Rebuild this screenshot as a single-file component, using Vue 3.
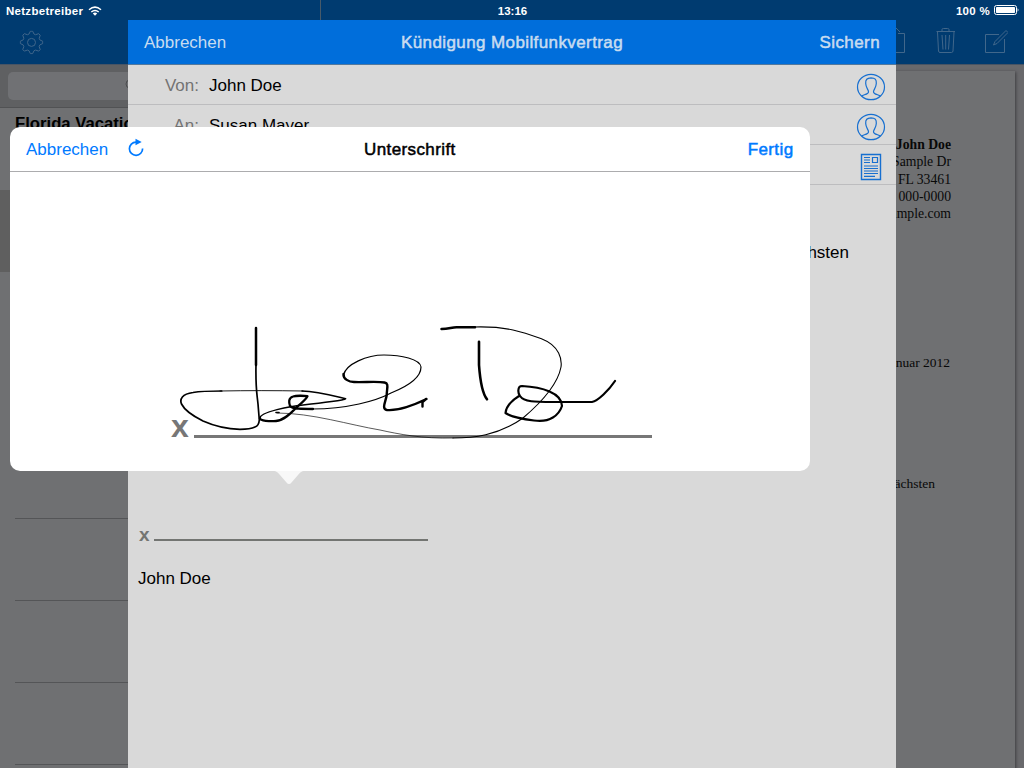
<script setup>
const address = ['John Doe', '123 Sample Dr', 'Lake Worth, FL 33461', '(555) 000-0000', 'john@example.com']
const fields = [
  { label: 'Von:', value: 'John Doe', icon: 'person' },
  { label: 'An:', value: 'Susan Mayer', icon: 'person' },
  { label: '', value: '', icon: 'document' },
]
const notes = [1, 2, 3, 4, 5, 6, 7, 8]
const gearPoints = Array.from({ length: 32 }, (_, i) => {
  const r = i % 4 < 2 ? 11.3 : 8.7
  const a = ((i * 11.25 - 95.6) * Math.PI) / 180
  return `${(12 + r * Math.cos(a)).toFixed(2)},${(12 + r * Math.sin(a)).toFixed(2)}`
}).join(' ')
</script>

<template>
  <div class="screen">
    <header class="nav">
      <div class="nav-left">
        <svg class="gear" width="24" height="24" viewBox="0 0 24 24">
          <polygon :points="gearPoints" stroke-linejoin="round" />
          <circle cx="12" cy="12" r="4" />
        </svg>
      </div>
      <div class="nav-right">
        <svg width="24" height="30" viewBox="0 0 24 30"><path d="M8 7.500H2V26.500H22.500V7.500H16M12.500 17V.5M7 6L12.500 .5L18 6" /></svg>
        <svg width="20" height="30" viewBox="0 0 20 30"><path d="M1.500 5.500H20M7 5V3.500Q7 2.500 8.500 2.500H12.500Q14 2.500 14 3.500V5M2.500 6L3.500 25Q3.700 26.500 5 26.500H16.500Q17.800 26.500 18 25L19 6M7 9L8 23.500M10.700 9V23.500M14.500 9L13.500 23.500" /></svg>
        <svg width="24" height="30" viewBox="0 0 24 30"><path d="M15 8.500H1.500V26.500H20.500V13M9.500 19L11 15.500L22 4.500L24 6.500L13 17.500Z" /></svg>
      </div>
    </header>

    <div class="columns">
      <aside class="sidebar">
        <div class="search">
          <div class="search-box">
            <svg width="12" height="12" viewBox="0 0 12 12"><circle cx="5" cy="5" r="4" /><path d="M8 8L11 11" /></svg>
          </div>
        </div>
        <div v-for="n in notes" :key="n" class="note" :class="{ selected: n === 2 }">
          <span v-if="n === 1">Florida Vacation</span>
        </div>
      </aside>
      <section class="preview">
        <article class="paper">
          <div class="address">
            <div v-for="(line, i) in address" :key="line" :class="{ strong: i === 0 }">{{ line }}</div>
          </div>
          <div class="date">1. Januar 2012</div>
          <div class="sentence">zum nächsten</div>
        </article>
      </section>
    </div>

    <div class="status">
      <div class="carrier">
        <span>Netzbetreiber</span>
        <svg width="14" height="10" viewBox="0 0 14 10">
          <path d="M1 3.700Q7-1.500 13 3.700M3.300 6Q7 2.900 10.700 6" fill="none" stroke="#fff" stroke-width="1.500" />
          <path d="M4.800 7.500Q7 5.700 9.200 7.500L7 9.800Z" fill="#fff" />
        </svg>
      </div>
      <div class="clock">13:16</div>
      <div class="battery">
        <span>100 %</span>
        <svg width="25" height="11" viewBox="0 0 25 11">
          <rect x=".5" y=".5" width="22" height="9" rx="2" fill="none" stroke="#fff" />
          <rect x="2" y="2" width="19" height="6" rx=".7" fill="#fff" />
          <path d="M23.600 3.300Q25.400 5 23.600 6.700Z" fill="#fff" />
        </svg>
      </div>
    </div>

    <div class="sheet">
      <div class="sheet-head">
        <span class="cancel">Abbrechen</span>
        <span class="medium sheet-title">Kündigung Mobilfunkvertrag</span>
        <span class="medium save">Sichern</span>
      </div>
      <div v-for="(f, i) in fields" :key="i" class="field">
        <span class="label">{{ f.label }}</span>
        <span class="value">{{ f.value }}</span>
        <svg v-if="f.icon === 'person'" width="30" height="28" viewBox="0 0 30 28">
          <ellipse cx="15" cy="14" rx="13.500" ry="12.700" />
          <path d="M5.500 23C8 21.500 12.700 21.300 12.500 18.700C12.300 16.500 10 15 9.700 10.500C9.400 6.500 11 5 15 4.800C19 4.800 20.600 6.500 20.300 10.500C20 15 17.700 16.500 17.500 18.700C17.300 21.300 22 21.500 24.500 23" />
        </svg>
        <svg v-else width="30" height="28" viewBox="0 0 30 28">
          <path d="M5.500 1.500H24.500V26.500H5.500Z" stroke-width="1.400" />
          <path d="M16.500 4.500H21.500V9.500H16.500ZM8 4.500H14M8 7H14M8 9.500H14M8 13H22M8 15.500H22M8 18H22M8 20.500H22M8 23.300H19" />
        </svg>
      </div>
      <div class="letter">
        <p class="body-end">zum nächsten</p>
        <div class="sign-line"><b>x</b><i></i></div>
        <p class="sender">John Doe</p>
      </div>
    </div>

    <div class="popover">
      <div class="pop-head">
        <span>Abbrechen</span>
        <svg class="reload" width="18" height="20" viewBox="0 0 18 20">
          <path d="M10 4.100H9A6.600 6.600 0 1 0 15.600 10.500" fill="none" stroke="#007aff" stroke-width="1.700" />
          <path d="M8.500 .800L14.700 3.900L8.500 7.200Z" fill="#007aff" />
        </svg>
        <span class="medium pop-title">Unterschrift</span>
        <span class="medium done">Fertig</span>
      </div>
      <div class="canvas">
        <div class="baseline"><b>x</b><i></i></div>
        <svg class="ink" width="800" height="299" viewBox="10 172 800 299">
          <path stroke-width="2.500" d="M256 328V365" />
          <path stroke-width="1.700" d="M256 364C255.500 388 256.500 390 258 404L259.300 420C259 424 258 426 255 427C251 429 246 429.300 240 429.300C226 429 212 425 203 421C193 416 184 409 181.500 404C179.500 399 182 394 193 392.500C202 391 211 391 221.700 391" />
          <path stroke-width=".9" d="M220 391C247 390.500 275 390.500 303 391" />
          <path stroke-width="1.500" d="M302 391C317 391.500 334 396 345.700 398.700C346 400 322 403 303 405C291 406 260 412 260 418" />
          <path stroke-width="2.300" d="M260 418C259 421 271 421.500 276 421C285 420 292 412 297 407C301 403 306 400 307.500 396.200C304 395.600 296 395.500 293 396.500C288 398 289 403 290 406C292 409 303 409 313 409" />
          <path stroke-width="1.200" d="M312 409C347 409 376 401 391 393C406 387 421 378 421 367C420 359 401 355 384 355C367 355 346 364 343.500 375" />
          <path stroke-width="2.400" d="M343.500 374C343 379 349 382 354 382C364 382.500 377 381 384.500 382.500C389 383.500 387 387 386.700 395C386 401 381 409 387 410C399 411 414 405 426.500 399M426 399L422.500 402V406.500" />
          <path stroke-width="2.600" d="M479 341.700V365C480 379 482 393 487 399.300" />
          <path stroke-width="2.500" d="M441.500 329C449 329 452 327 457 327.200H475" />
          <path stroke-width="1.100" d="M474 327C507 326 523 332 542 339C560 346 562 360 561 367C558 383 543 401 523 418C498 436 472 438 453 438" />
          <path stroke-width=".65" d="M453 438C423 439 398 434 380 430C350 425 312 413 277 413" />
          <path stroke-width="1.600" d="M276 412.500H279" />
          <path stroke-width="2.200" d="M519 396C511 401 506 407 505.500 413C511 417 523 419 534 420.500C550 423 559 415 562 406C562 393 542 387 522 386C517 386 518 394 520 396C524 402 535 402 553 402H592C598 401 609 390 615 381" />
        </svg>
      </div>
      <svg class="arrow" width="32" height="14" viewBox="0 0 32 14"><path d="M0 0C4 0 5 2 7 4L13.500 11.500Q16 14.500 18.500 11.500L25 4C27 2 28 0 32 0Z" fill="#f8f8f8" /></svg>
    </div>
  </div>
</template>

<style>
body { margin: 0; overflow: hidden; }
</style>

<style scoped>
* { box-sizing: border-box; }
.screen { position: relative; width: 1024px; height: 768px; overflow: hidden; display: flex; flex-direction: column; font: 17px/20px "Liberation Sans", Arial, sans-serif; color: #000; background: #6f7072; white-space: nowrap; }
svg { display: block; flex: none; }
.medium { -webkit-text-stroke: .5px currentColor; letter-spacing: .4px; }

.nav { height: 65px; flex: none; display: flex; background: #003b70; border-bottom: 1px solid #485464; padding-top: 20px; }
.nav svg { fill: none; stroke: #41678b; stroke-width: 1; }
.nav-left { width: 321px; border-right: 1px solid #003b70; padding: 10px 0 0 19px; }
.gear { transform: translate(.5px, .4px); }
.nav-right { flex: 1; display: flex; justify-content: flex-end; gap: 29px; padding: 6px 16px 0 0; }
.columns { flex: 1; display: flex; min-height: 0; }
.sidebar { width: 320px; overflow: hidden; }
.search { height: 43px; background: #5f6062; border-bottom: 1px solid #515254; padding: 7px 8px; }
.search-box { height: 28px; border-radius: 5px; background: #707174; padding: 7px 0 0 117px; }
.search-box svg { fill: none; stroke: #4b4c4e; }
.note { height: 82px; padding: 6px 15px 0; font-weight: bold; font-size: 16.700px; position: relative; }
.note::after { content: ""; display: block; height: 1px; background: #545557; position: absolute; left: 15px; right: 0; bottom: -1px; }
.selected { background: #5f5f5f; }
.selected::after { background: none; }
.preview { flex: 1; background: #69696c; padding-top: 6px; }
.paper { width: 695px; height: 700px; background: #6f7072; box-shadow: 1px 1px 3px #3d3d40; padding: 65px 64px 0 0; font: 13.700px/17.300px "Liberation Serif", serif; text-align: right; color: #080808; }
.strong { font-weight: bold; }
.date { margin-top: 132px; font-size: 13.500px; padding-right: 1px; }
.sentence { margin-top: 103px; padding-right: 16px; font-size: 13.500px; }

.status { position: absolute; left: 0; top: 0; width: 1024px; height: 20px; display: grid; grid-template-columns: 1fr 60px 1fr; align-items: center; padding: 1px 5px 0 6px; font: bold 11.500px/18px "Liberation Sans", Arial, sans-serif; color: #fff; background: linear-gradient(#485a69, #485a69) 320px 0 / 1px 20px no-repeat; }
.carrier, .battery { display: flex; align-items: center; gap: 5px; }
.carrier span { letter-spacing: .28px; }
.battery { justify-content: flex-end; gap: 4px; }
.battery span { letter-spacing: .3px; }
.clock { text-align: center; }

.sheet { position: absolute; left: 128px; top: 20px; width: 768px; height: 748px; background: #d9d9d9; }
.sheet-head { height: 45px; background: #006edb; border-bottom: 1px solid #53799e; display: grid; grid-template-columns: 1fr auto 1fr; padding: 13px 16px 0; color: #c8dcf0; }
.save { text-align: right; }
.field { height: 40px; border-bottom: 1px solid #bdbdbf; display: flex; padding: 11px 10px 0 0; }
.label { width: 71px; text-align: right; color: #737373; margin-right: 10px; }
.value { flex: 1; }
.field svg { margin-top: -3px; fill: none; stroke: #176fd0; stroke-width: 1.200; }
.letter { padding: 58px 0 0 10px; }
.letter p { margin: 0; }
.body-end { width: 711px; text-align: right; }
.sign-line { display: flex; align-items: flex-end; gap: 4px; height: 20px; margin-top: 258px; color: #737572; }
.sign-line b { width: 12px; font-size: 19px; line-height: 20px; padding-left: 1px; margin-bottom: -4px; }
.sign-line i { width: 274px; height: 2px; background: #737572; }
.sender { padding-top: 28px; }

.popover { position: absolute; left: 10px; top: 127px; width: 800px; height: 344px; border-radius: 10px; background: #fff; }
.pop-head { height: 45px; border-bottom: 1px solid #acacae; display: grid; grid-template-columns: 101px 237px 1fr auto; padding: 13px 16.500px 0 16px; color: #007aff; }
.reload { margin-top: -2px; }
.pop-title { color: #000; }
.canvas { position: relative; height: 299px; padding: 243px 0 0 160px; }
.baseline { display: flex; align-items: flex-end; height: 23px; gap: 6px; color: #777; }
.baseline b { width: 18px; font-size: 32px; line-height: 24px; margin-bottom: 0; padding-left: 1px; }
.baseline i { width: 458px; height: 3px; background: #777; }
.ink { position: absolute; left: 0; top: 0; fill: none; stroke: #000; stroke-linecap: round; stroke-linejoin: round; }
.arrow { position: absolute; left: 263px; top: 344px; }
</style>
